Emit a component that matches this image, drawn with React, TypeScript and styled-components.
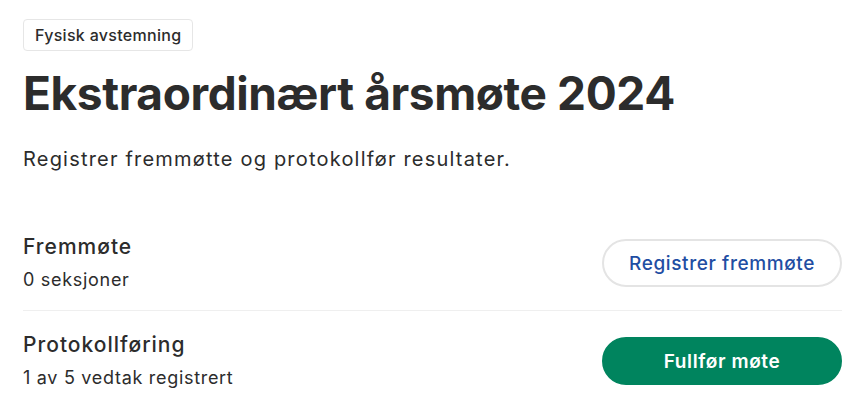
import styled, { createGlobalStyle } from 'styled-components';

const GlobalStyle = createGlobalStyle`
  * {
    box-sizing: border-box;
  }

  body {
    margin: 0;
    background: #ffffff;
    font-family: Inter, "Noto Sans", sans-serif;
    color: #2c2c2c;
  }
`;

const Page = styled.main`
  display: flex;
  flex-direction: column;
  padding: 19px 25px 0 23px;
`;

const Badge = styled.span`
  align-self: flex-start;
  display: inline-flex;
  align-items: center;
  height: 32px;
  padding: 0 11px;
  border: 1px solid #e6e6e6;
  border-radius: 4px;
  font-size: 16px;
  font-weight: 500;
  letter-spacing: 0.3px;
  color: #2c2c2c;
`;

const Title = styled.h1`
  margin: 14px 0 0;
  font-size: 46px;
  line-height: 56px;
  font-weight: 700;
  letter-spacing: -0.4px;
  color: #2c2c2c;
`;

const Lead = styled.p`
  margin: 23px 0 0;
  font-size: 20px;
  line-height: 30px;
  letter-spacing: 1.2px;
  color: #2c2c2c;
`;

const Steps = styled.div`
  display: flex;
  flex-direction: column;
  margin-top: 40px;
`;

const Step = styled.div`
  display: flex;
  align-items: center;
  justify-content: space-between;
  padding: 20px 0 18px;

  & + & {
    border-top: 1px solid #efefef;
    padding-top: 21px;
  }
`;

const StepText = styled.div`
  display: flex;
  flex-direction: column;
  gap: 8px;
`;

const StepTitle = styled.h2`
  margin: 0;
  font-size: 21px;
  line-height: 26px;
  font-weight: 500;
  letter-spacing: 1px;
  color: #2c2c2c;
`;

const StepMeta = styled.span`
  font-size: 18px;
  line-height: 24px;
  letter-spacing: 0.7px;
  color: #2c2c2c;
`;

const Button = styled.button<{ $primary?: boolean }>`
  width: 240px;
  height: 48px;
  border-radius: 24px;
  font-family: inherit;
  font-size: 19px;
  font-weight: ${(p) => (p.$primary ? 600 : 500)};
  letter-spacing: 0.6px;
  cursor: pointer;
  border: 2px solid ${(p) => (p.$primary ? '#00845e' : '#e4e4e4')};
  background: ${(p) => (p.$primary ? '#00845e' : '#ffffff')};
  color: ${(p) => (p.$primary ? '#ffffff' : '#1f4ea3')};
`;

const App = () => (
  <>
    <GlobalStyle />
    <Page>
      <Badge>Fysisk avstemning</Badge>
      <Title>Ekstraordinært årsmøte 2024</Title>
      <Lead>Registrer fremmøtte og protokollfør resultater.</Lead>
      <Steps>
        <Step>
          <StepText>
            <StepTitle>Fremmøte</StepTitle>
            <StepMeta>0 seksjoner</StepMeta>
          </StepText>
          <Button>Registrer fremmøte</Button>
        </Step>
        <Step>
          <StepText>
            <StepTitle>Protokollføring</StepTitle>
            <StepMeta>1 av 5 vedtak registrert</StepMeta>
          </StepText>
          <Button $primary>Fullfør møte</Button>
        </Step>
      </Steps>
    </Page>
  </>
);

export default App;
